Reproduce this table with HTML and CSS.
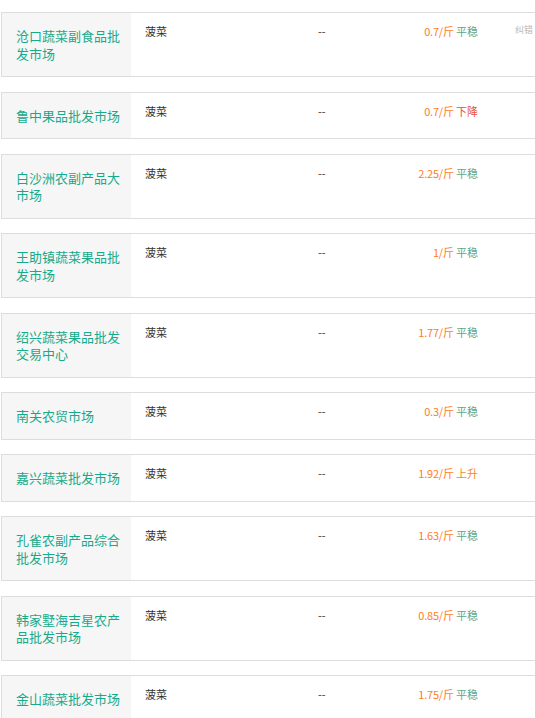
FILE: index.html
```html
<!DOCTYPE html>
<html lang="zh-CN">
<head>
<meta charset="utf-8">
<title>菠菜价格</title>
<link rel="stylesheet" href="styles.css">
</head>
<body>
<div class="list">
  <div class="row"><div class="name">沧口蔬菜副食品批发市场</div><div class="prod">菠菜</div><div class="dash">--</div><div class="price"><span class="num">0.7/斤</span> <span class="flat">平稳</span></div><div class="fix">纠错</div></div>
  <div class="row"><div class="name">鲁中果品批发市场</div><div class="prod">菠菜</div><div class="dash">--</div><div class="price"><span class="num">0.7/斤</span> <span class="down">下降</span></div><div class="fix"></div></div>
  <div class="row"><div class="name">白沙洲农副产品大市场</div><div class="prod">菠菜</div><div class="dash">--</div><div class="price"><span class="num">2.25/斤</span> <span class="flat">平稳</span></div><div class="fix"></div></div>
  <div class="row"><div class="name">王助镇蔬菜果品批发市场</div><div class="prod">菠菜</div><div class="dash">--</div><div class="price"><span class="num">1/斤</span> <span class="flat">平稳</span></div><div class="fix"></div></div>
  <div class="row"><div class="name">绍兴蔬菜果品批发交易中心</div><div class="prod">菠菜</div><div class="dash">--</div><div class="price"><span class="num">1.77/斤</span> <span class="flat">平稳</span></div><div class="fix"></div></div>
  <div class="row"><div class="name">南关农贸市场</div><div class="prod">菠菜</div><div class="dash">--</div><div class="price"><span class="num">0.3/斤</span> <span class="flat">平稳</span></div><div class="fix"></div></div>
  <div class="row"><div class="name">嘉兴蔬菜批发市场</div><div class="prod">菠菜</div><div class="dash">--</div><div class="price"><span class="num">1.92/斤</span> <span class="up">上升</span></div><div class="fix"></div></div>
  <div class="row"><div class="name">孔雀农副产品综合批发市场</div><div class="prod">菠菜</div><div class="dash">--</div><div class="price"><span class="num">1.63/斤</span> <span class="flat">平稳</span></div><div class="fix"></div></div>
  <div class="row"><div class="name">韩家墅海吉星农产品批发市场</div><div class="prod">菠菜</div><div class="dash">--</div><div class="price"><span class="num">0.85/斤</span> <span class="flat">平稳</span></div><div class="fix"></div></div>
  <div class="row"><div class="name">金山蔬菜批发市场</div><div class="prod">菠菜</div><div class="dash">--</div><div class="price"><span class="num">1.75/斤</span> <span class="flat">平稳</span></div><div class="fix"></div></div>
</div>
</body>
</html>
```
FILE: styles.css
```css
html, body {
  margin: 0;
  padding: 0;
  overflow: hidden;
  background: #fff;
}
body {
  font-family: "Noto Sans CJK SC", "Noto Sans", sans-serif;
  color: #333;
}
.list {
  padding: 12px 0 0 1px;
}
.row {
  display: flex;
  width: 580px;
  border: 1px solid #dddddd;
  margin-bottom: 14.5px;
}
.name {
  flex: 0 0 129px;
  box-sizing: border-box;
  padding: 14px 10px 14px 14px;
  background: #f6f6f6;
  color: #16aa8b;
  font-size: 13px;
  line-height: 17.5px;
}
.prod, .dash, .price, .fix {
  box-sizing: border-box;
  padding-top: 10px;
  font-size: 11px;
  line-height: 17px;
}
.prod {
  flex: 0 0 173px;
  padding-left: 14px;
  color: #333;
}
.dash {
  flex: 0 0 76px;
  padding-left: 14px;
  color: #333;
}
.price {
  flex: 0 0 98px;
  text-align: right;
  letter-spacing: -0.2px;
}
.num {
  color: #ff7d1a;
}
.flat {
  color: #5da68c;
  letter-spacing: 0;
}
.down {
  color: #e5533f;
  letter-spacing: 0;
}
.up {
  color: #f28a1e;
  letter-spacing: 0;
}
.fix {
  flex: 0 0 80px;
  padding-top: 8px;
  padding-left: 37px;
  font-size: 9px;
  color: #b8b8b8;
}
```
